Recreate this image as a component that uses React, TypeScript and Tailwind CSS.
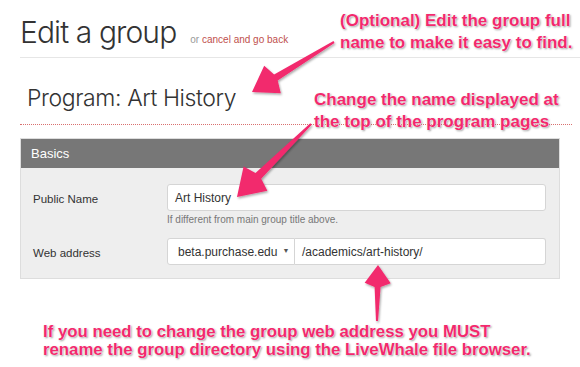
import React from "react";

const PINK = "#f2296d";

function arrowPoints(
  tail: [number, number],
  tip: [number, number],
  headLen: number,
  headW: number,
  tailW: number,
  neckW: number
): string {
  const dx = tip[0] - tail[0];
  const dy = tip[1] - tail[1];
  const len = Math.hypot(dx, dy);
  const ux = dx / len;
  const uy = dy / len;
  const px = -uy;
  const py = ux;
  const bx = tip[0] - ux * headLen;
  const by = tip[1] - uy * headLen;
  const pts: [number, number][] = [
    [tail[0] + px * tailW / 2, tail[1] + py * tailW / 2],
    [bx + px * neckW / 2, by + py * neckW / 2],
    [bx + px * headW / 2 + ux * 4, by + py * headW / 2 + uy * 4],
    [tip[0], tip[1]],
    [bx - px * headW / 2 + ux * 4, by - py * headW / 2 + uy * 4],
    [bx - px * neckW / 2, by - py * neckW / 2],
    [tail[0] - px * tailW / 2, tail[1] - py * tailW / 2],
  ];
  return pts.map((p) => `${p[0].toFixed(1)},${p[1].toFixed(1)}`).join(" ");
}

const noteCls =
  "absolute font-bold text-[#f2296d] whitespace-nowrap [font-family:'Liberation_Sans',Arial,sans-serif] [text-shadow:0_0_1px_#fff,0_0_2px_#fff,1px_1px_2px_rgba(0,0,0,0.45)]";

export default function App() {
  return (
    <div className="relative w-[580px] h-[367px] overflow-hidden bg-white text-[#333] [font-family:'Liberation_Sans',Arial,sans-serif]">
      <div className="pl-[20px] pt-[14px]">
        <div className="flex items-baseline border-b border-[#e6e6e6] pb-[7px]">
          <span className="text-[30px] leading-[36px] font-light tracking-[-0.9px] text-[#333] [font-family:Inter,sans-serif]">
            Edit a group
          </span>
          <span className="ml-[14px] text-[10px] text-[#999]">
            or <span className="text-[#c0504d]">cancel and go back</span>
          </span>
        </div>
        <div className="mr-[8px] border-b border-dotted border-[#d9706f] pl-[7px] pt-[24px] pb-[10px]">
          <span className="text-[23px] leading-[32px] font-light tracking-[-0.4px] text-[#333] [font-family:Inter,sans-serif]">
            Program: Art History
          </span>
        </div>
        <div className="mt-[13px] w-[540px] border border-[#ddd]">
          <div className="bg-[#777] h-[29px] pl-[10px] flex items-center text-white text-[13px]">
            Basics
          </div>
          <div className="bg-[#eee] pt-[16px] pb-[13px] pr-[13px]">
            <div className="flex">
              <div className="w-[146px] pl-[12px] pt-[7px] text-[11.5px] text-[#333]">
                Public Name
              </div>
              <div className="flex-1">
                <div className="h-[27px] bg-white border border-[#d5d5d5] rounded-[3px] flex items-center pl-[7px] text-[12px] text-[#333]">
                  Art History
                </div>
                <div className="mt-[2px] text-[10px] leading-[14px] text-[#777]">
                  If different from main group title above.
                </div>
              </div>
            </div>
            <div className="flex mt-[11px]">
              <div className="w-[146px] pl-[12px] pt-[7px] text-[11.5px] text-[#333]">
                Web address
              </div>
              <div className="flex-1 flex h-[27px]">
                <div className="w-[128px] bg-white border border-[#d5d5d5] rounded-l-[3px] flex items-center pl-[10px] text-[12px] text-[#333]">
                  beta.purchase.edu
                  <span className="ml-[5px] text-[7px] text-[#555]">▼</span>
                </div>
                <div className="flex-1 bg-white border border-l-0 border-[#d5d5d5] rounded-r-[3px] flex items-center pl-[7px] text-[12px] text-[#333]">
                  /academics/art-history/
                </div>
              </div>
            </div>
          </div>
        </div>
      </div>

      <svg
        className="absolute left-0 top-0 pointer-events-none"
        width="580"
        height="367"
        viewBox="0 0 580 367"
      >
        <defs>
          <filter id="sh" x="-20%" y="-20%" width="140%" height="140%">
            <feDropShadow dx="1" dy="1.5" stdDeviation="1.2" floodColor="#000" floodOpacity="0.35" />
          </filter>
        </defs>
        <g fill={PINK} filter="url(#sh)">
          <polygon points={arrowPoints([334, 42], [252, 92], 28, 32, 2, 7)} />
          <polygon points={arrowPoints([311, 124], [237, 197], 30, 34, 2, 8)} />
          <polygon points={arrowPoints([377, 321], [378, 265], 22, 26, 2, 6)} />
        </g>
      </svg>

      <div className={`${noteCls} left-[340px] top-[10px] text-[17px] leading-[22px]`}>
        (Optional) Edit the group full
        <br />
        name to make it easy to find.
      </div>
      <div className={`${noteCls} left-[314px] top-[89px] text-[17px] leading-[22px]`}>
        Change the name displayed at
        <br />
        the top of the program pages
      </div>
      <div className={`${noteCls} left-[43px] top-[323px] text-[16.8px] leading-[18px]`}>
        If you need to change the group web address you MUST
        <br />
        rename the group directory using the LiveWhale file browser.
      </div>
    </div>
  );
}
